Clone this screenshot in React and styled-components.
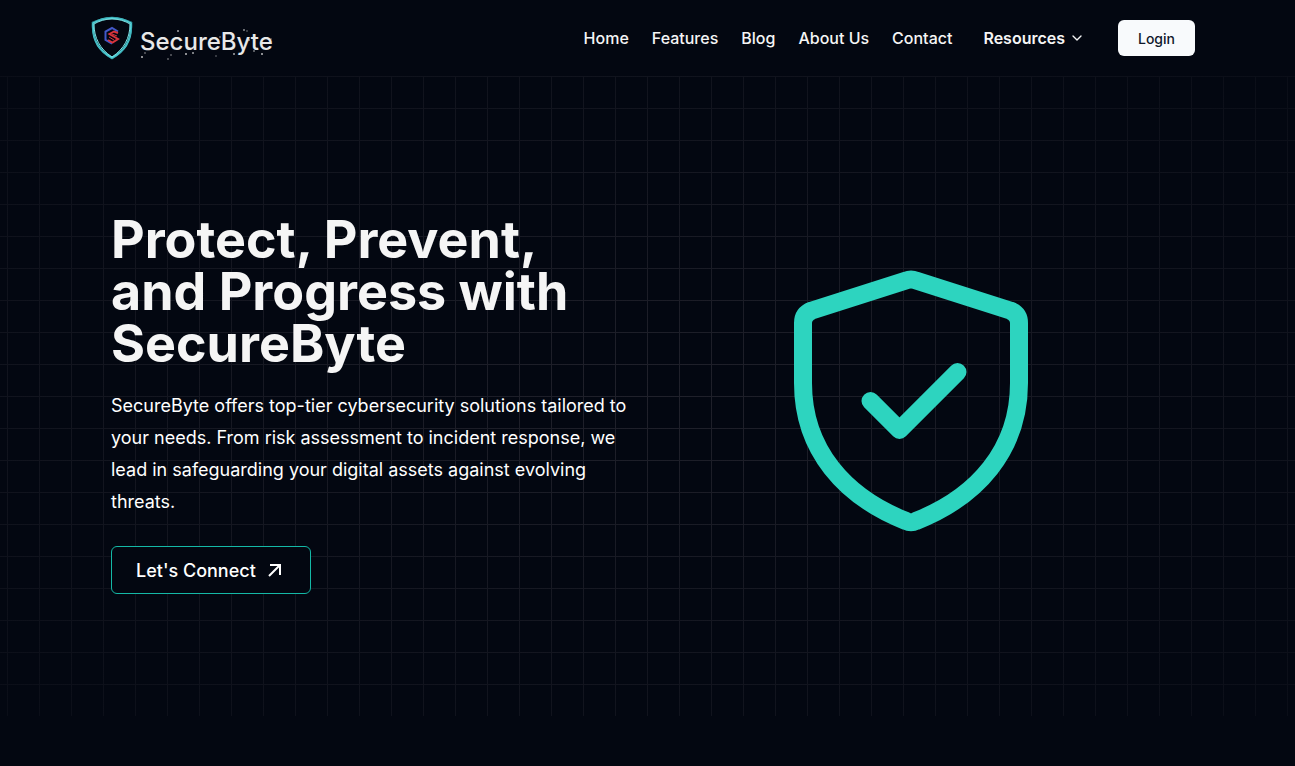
import { useState } from "react"
import styled, { createGlobalStyle } from "styled-components"
import { ChevronDown } from "lucide-react"

const links = ["Home", "Features", "Blog", "About Us", "Contact"]

// x, y, radius, opacity
const specks = [
    [2, 30, 1, 0.8], [5, 26, 1, 0.4], [28, 32, 1, 0.4], [31, 28, 1, 0.4],
    [38, 4, 1, 0.7], [46, 27, 1, 0.8], [53, 26, 1, 0.7], [76, 29, 1, 0.3],
    [80, 10, 1, 0.4], [94, 27, 1, 0.7], [104, 3, 1, 0.6], [107, 4, 1, 0.3],
    [109, 13, 1, 0.6], [114, 24, 1, 0.5], [122, 27, 1, 0.8], [131, 12, 1, 0.3],
]

export default function App() {
    const [open, setOpen] = useState(false)

    return (
        <>
            <GlobalStyle />
            <Header>
                <HeaderInner>
                    <Brand href="#">
                        <LogoMark />
                        <BrandName>
                            SecureByte
                            <Specks viewBox="0 0 136 36" aria-hidden="true">
                                {specks.map(([x, y, r, o]) => (
                                    <circle key={`${x}-${y}`} cx={x} cy={y} r={r} fill="#e8e8e8" opacity={o} />
                                ))}
                            </Specks>
                        </BrandName>
                    </Brand>
                    <Nav>
                        {links.map(link => <NavLink key={link} href="#">{link}</NavLink>)}
                        <Resources type="button" aria-expanded={open} onClick={() => setOpen(!open)}>
                            Resources
                            <ChevronDown size={16} />
                        </Resources>
                        <LoginButton type="button">Login</LoginButton>
                    </Nav>
                </HeaderInner>
            </Header>
            <Hero>
                <HeroInner>
                    <HeroText>
                        <Title>Protect, Prevent, and Progress with SecureByte</Title>
                        <Lead>
                            SecureByte offers top-tier cybersecurity solutions tailored to your needs. From
                            risk assessment to incident response, we lead in safeguarding your digital
                            assets against evolving threats.
                        </Lead>
                        <ConnectLink href="#">
                            Let's Connect
                            <Arrow />
                        </ConnectLink>
                    </HeroText>
                    <Shield viewBox="0 0 288 288" aria-hidden="true">
                        <path d="M139 23.500 Q144 21.500 149 23.500 L243 53.500 Q252 57 252 66 V126 C252 193 210 240 149 264 Q144 266.500 139 264 C78 240 36 193 36 126 V66 Q36 57 45 53.500 Z" />
                        <path d="M103.500 144 L132.500 173 L190.500 115" />
                    </Shield>
                </HeroInner>
            </Hero>
        </>
    )
}

function LogoMark() {
    return (
        <svg width="42" height="44" viewBox="0 0 42 44" fill="none" aria-hidden="true">
            <path d="M21 2 C15 2 7 4 2 7 C1 22 6 34 21 42 C36 34 41 22 40 7 C35 4 27 2 21 2 Z" stroke="#4fcfd6" strokeWidth="2" />
            <path d="M21 3 C14 3 8 5 3 8 C3 22 9 33 21 41 C33 33 39 22 39 8 C34 5 28 3 21 3 Z" stroke="#7fe6ea" strokeWidth="1" />
            <path d="M21 1 C13 2 7 4 1 6 C1 22 7 35 21 43 C35 35 41 22 41 6 C35 4 29 2 21 1 Z" stroke="#2f9ba6" strokeWidth="1" opacity="0.6" />
            <path d="M27 15.500 L21 12 L14.500 15.500 V24 L21 27.500" stroke="#4358c8" strokeWidth="2" />
            <path d="M27 17 L23 15.500 L18.500 18 L27 23 L21.500 26.500 L17 24" stroke="#d8343c" strokeWidth="2" />
            <path d="M21 18 L26 20 M18 21 L23 24" stroke="#d8343c" strokeWidth="1" />
        </svg>
    )
}

function Arrow() {
    return (
        <svg width="14" height="14" viewBox="0 0 14 14" fill="none" stroke="currentColor" strokeWidth="2" aria-hidden="true">
            <path d="M2 2 H12 V12 M12 2 L1 13" />
        </svg>
    )
}

const GlobalStyle = createGlobalStyle`
    * {
        box-sizing: border-box;
    }

    body {
        margin: 0;
        background-color: #030711;
        color: #f5f5f5;
        font-family: Inter, "Liberation Sans", sans-serif;
    }
`

const Header = styled.header`
    padding: 0 100px 0 91px;
`

const HeaderInner = styled.div`
    display: flex;
    align-items: center;
    justify-content: space-between;
    max-width: 1200px;
    height: 76px;
    margin: 0 auto;
`

const Brand = styled.a`
    display: flex;
    align-items: center;
    gap: 7px;
    color: #e8e8e8;
    text-decoration: none;
`

const BrandName = styled.span`
    position: relative;
    padding-top: 8px;
    font-size: 24px;
    font-weight: 500;
    line-height: 32px;
`

const Specks = styled.svg`
    position: absolute;
    left: 0;
    bottom: -5px;
    width: 136px;
    height: 36px;
`

const Nav = styled.nav`
    display: flex;
    align-items: center;
    gap: 23px;
`

const NavLink = styled.a`
    color: inherit;
    font-size: 16px;
    font-weight: 500;
    line-height: 24px;
    text-decoration: none;
`

const Resources = styled.button`
    display: flex;
    align-items: center;
    gap: 4px;
    margin-right: 10px;
    padding: 0 0 0 8px;
    border: none;
    background: none;
    color: inherit;
    font-family: inherit;
    font-size: 16px;
    font-weight: 600;
    line-height: 24px;
    cursor: pointer;
`

const LoginButton = styled.button`
    height: 36px;
    padding: 0 20px;
    border: none;
    border-radius: 6px;
    background-color: #f8fafc;
    color: #0f172a;
    font-family: inherit;
    font-size: 14px;
    font-weight: 500;
    cursor: pointer;
`

/* the first layer dims the grid towards the edges */
const Hero = styled.section`
    display: flex;
    align-items: center;
    min-height: 640px;
    padding: 138px 100px 122px;
    background-image:
        radial-gradient(ellipse at center, transparent 0%, rgba(3, 7, 17, 0.75) 100%),
        linear-gradient(to right, #20212b 1px, transparent 1px),
        linear-gradient(to bottom, #20212b 1px, transparent 1px);
    background-size: auto, 32px 32px, 32px 32px;
    background-position: 0 0, 7px 0, 7px 0;
`

const HeroInner = styled.div`
    display: grid;
    grid-template-columns: 1fr 1fr;
    align-items: center;
    width: 100%;
    max-width: 1200px;
    margin: 0 auto;
    padding: 0 18px 0 11px;
`

const HeroText = styled.div`
    display: flex;
    flex-direction: column;
    align-items: flex-start;
`

const Title = styled.h1`
    max-width: 500px;
    margin: 0;
    font-size: 52px;
    font-weight: 700;
    line-height: 52px;
`

const Lead = styled.p`
    margin: 20px 0 28px;
    color: #ffffff;
    font-size: 18px;
    line-height: 32px;
`

const ConnectLink = styled.a`
    display: flex;
    align-items: center;
    gap: 12px;
    height: 48px;
    padding: 0 28px 0 24px;
    border: 1px solid #14b8a6;
    border-radius: 6px;
    background-color: #030711;
    color: #ffffff;
    font-size: 18px;
    font-weight: 500;
    text-decoration: none;
`

const Shield = styled.svg`
    justify-self: center;
    width: 288px;
    height: 288px;
    margin-bottom: 6px;
    fill: none;
    stroke: #2dd4bf;
    stroke-width: 18;
    stroke-linecap: round;
    stroke-linejoin: round;
`
